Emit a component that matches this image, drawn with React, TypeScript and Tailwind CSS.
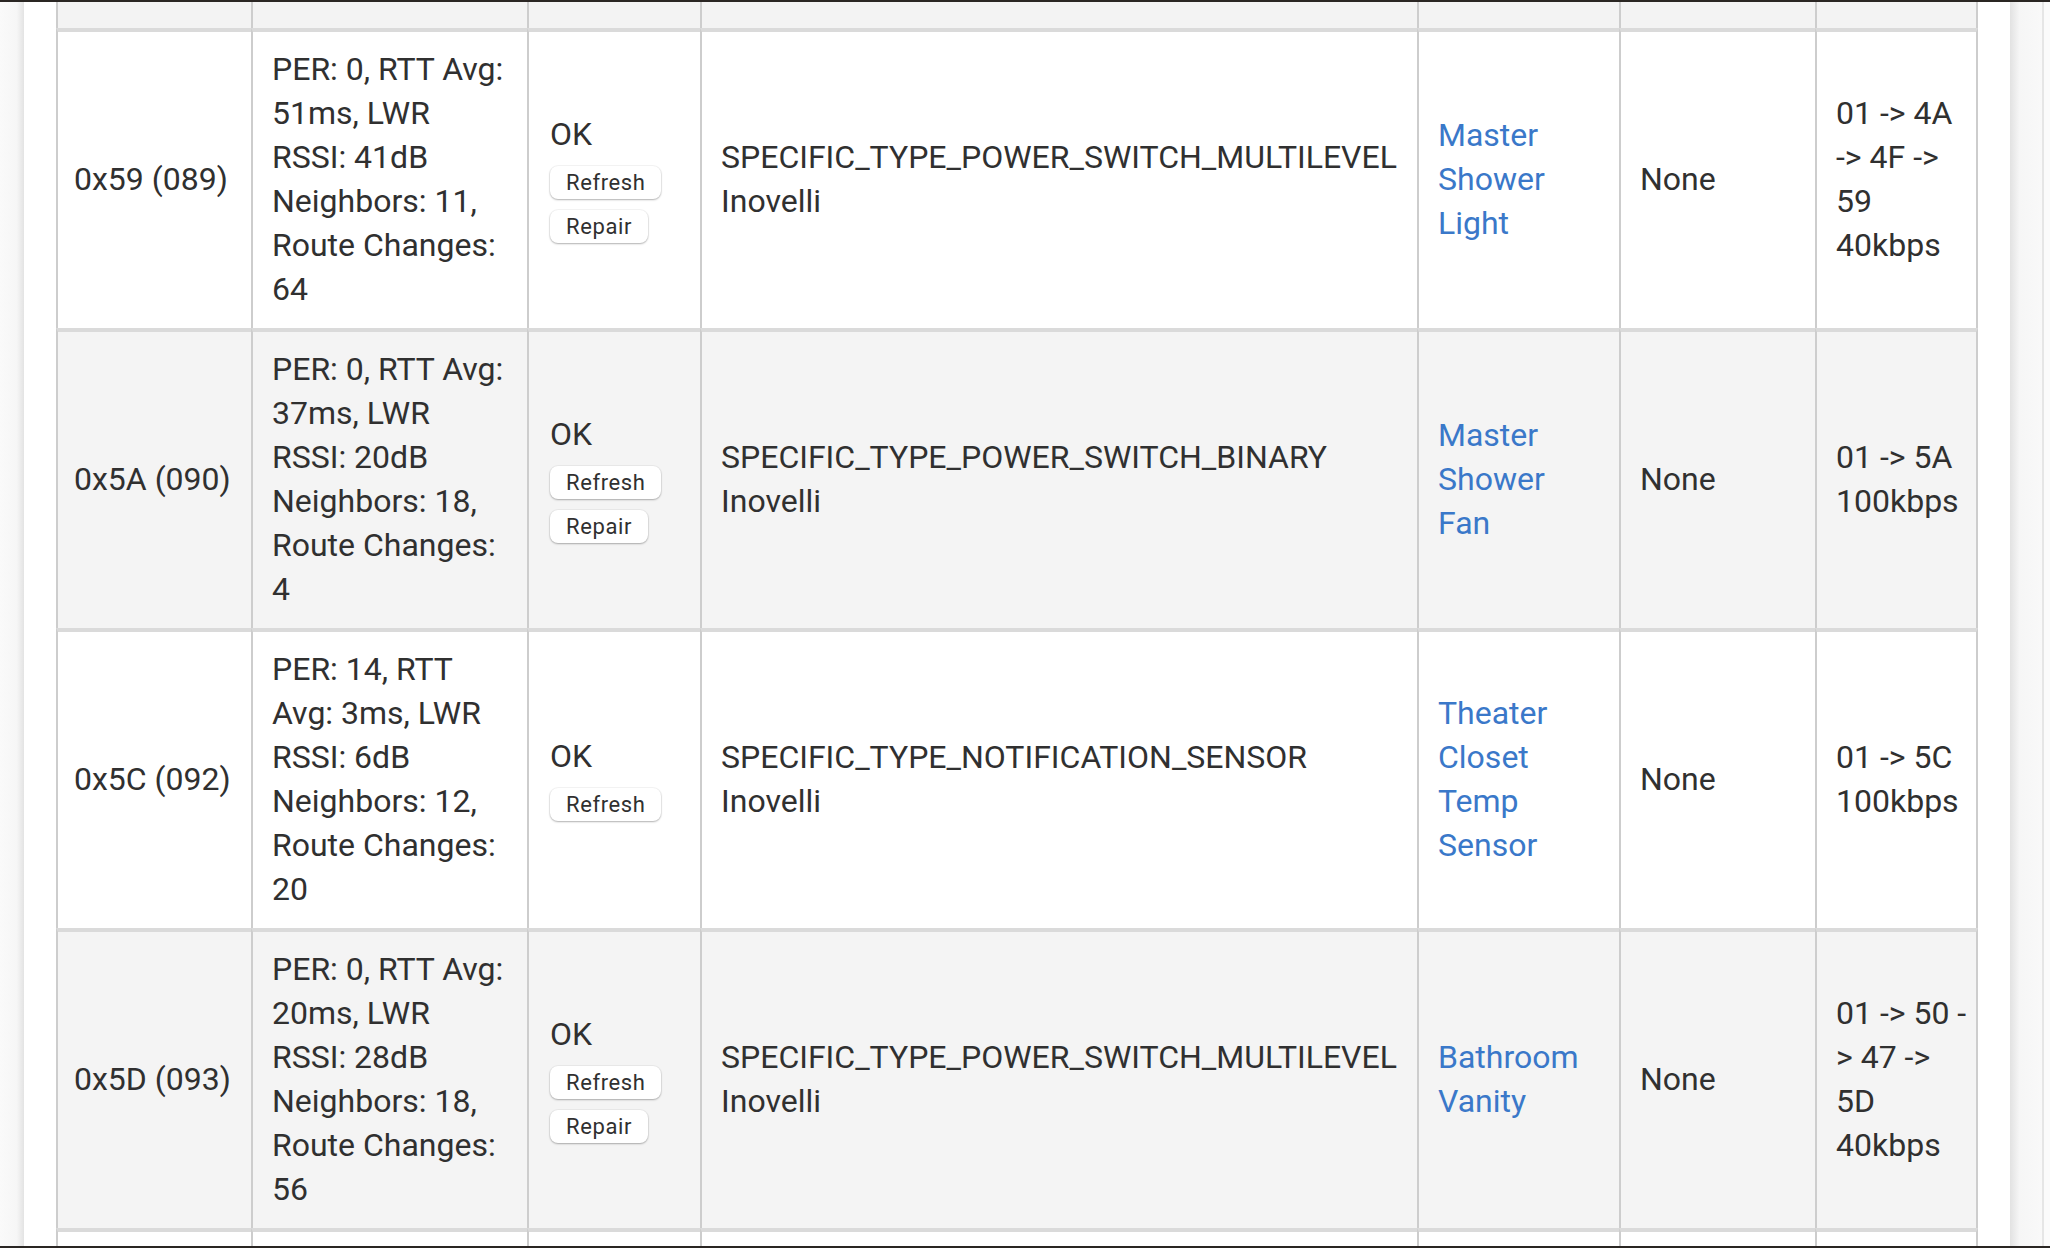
type NodeRow = {
  node: string;
  stats: string[];
  repair: boolean;
  type: string;
  maker: string;
  device: string[];
  security: string;
  route: string[];
};

const rows: NodeRow[] = [
  {
    node: "0x59 (089)",
    stats: ["PER: 0, RTT Avg:", "51ms, LWR", "RSSI: 41dB", "Neighbors: 11,", "Route Changes:", "64"],
    repair: true,
    type: "SPECIFIC_TYPE_POWER_SWITCH_MULTILEVEL",
    maker: "Inovelli",
    device: ["Master", "Shower", "Light"],
    security: "None",
    route: ["01 -> 4A", "-> 4F ->", "59", "40kbps"],
  },
  {
    node: "0x5A (090)",
    stats: ["PER: 0, RTT Avg:", "37ms, LWR", "RSSI: 20dB", "Neighbors: 18,", "Route Changes:", "4"],
    repair: true,
    type: "SPECIFIC_TYPE_POWER_SWITCH_BINARY",
    maker: "Inovelli",
    device: ["Master", "Shower", "Fan"],
    security: "None",
    route: ["01 -> 5A", "100kbps"],
  },
  {
    node: "0x5C (092)",
    stats: ["PER: 14, RTT", "Avg: 3ms, LWR", "RSSI: 6dB", "Neighbors: 12,", "Route Changes:", "20"],
    repair: false,
    type: "SPECIFIC_TYPE_NOTIFICATION_SENSOR",
    maker: "Inovelli",
    device: ["Theater", "Closet", "Temp", "Sensor"],
    security: "None",
    route: ["01 -> 5C", "100kbps"],
  },
  {
    node: "0x5D (093)",
    stats: ["PER: 0, RTT Avg:", "20ms, LWR", "RSSI: 28dB", "Neighbors: 18,", "Route Changes:", "56"],
    repair: true,
    type: "SPECIFIC_TYPE_POWER_SWITCH_MULTILEVEL",
    maker: "Inovelli",
    device: ["Bathroom", "Vanity"],
    security: "None",
    route: ["01 -> 50 -", "> 47 ->", "5D", "40kbps"],
  },
];

const grid = "grid grid-cols-[195px_276px_173px_717px_202px_196px_163px]";
const border = "flex items-center border-l-2 border-l-[#cdcdcd] border-t-4 border-t-[#dadada] pt-[15px] pb-[17px]";
const cell = border + " px-[19px]";
const nodeCell = border + " whitespace-nowrap px-[16px]";
const okCell = border + " px-[21px]";
const lastCell = cell + " border-r-2 border-r-[#cdcdcd]";

function Lines({ lines }: { lines: string[] }) {
  return (
    <div>
      {lines.map((l, i) => (
        <div key={i} className="whitespace-nowrap">{l}</div>
      ))}
    </div>
  );
}

function SmallBtn({ label, className }: { label: string; className?: string }) {
  return (
    <button className={"h-[33px] rounded-lg bg-white px-4 text-[22px] leading-[33px] tracking-[0.6px] text-[#303030] shadow-[0_1px_2px_rgba(0,0,0,0.28),0_0_0_1px_rgba(0,0,0,0.04)] " + (className || "")}>
      {label}
    </button>
  );
}

function EmptyRow({ bg, h, top }: { bg: string; h: string; top: boolean }) {
  const base = "border-l-2 border-l-[#cdcdcd]" + (top ? " border-t-4 border-t-[#dadada]" : "");
  return (
    <div className={grid + " " + bg + " " + h}>
      <div className={base} />
      <div className={base} />
      <div className={base} />
      <div className={base} />
      <div className={base} />
      <div className={base} />
      <div className={base + " border-r-2 border-r-[#cdcdcd]"} />
    </div>
  );
}

export default function App() {
  return (
    <div className="flex h-[1248px] w-[2050px] flex-col overflow-hidden bg-white font-[Roboto,sans-serif] text-[32px] leading-[44px] text-[#303030]">
      <div className="h-[2px] shrink-0 bg-[#2a2623]" />
      <div className="flex min-h-0 flex-1">
        <div className="w-[24px] shrink-0 bg-[linear-gradient(to_right,#fafafa,#f6f6f6_70%,#e3e3e3)]" />
        <div className="shrink-0 px-[32px]">
          <EmptyRow bg="bg-[#f3f3f3]" h="h-[26px]" top={false} />
          {rows.map((r, i) => (
            <div key={r.node} className={grid + " " + (i % 2 === 0 ? "bg-white" : "bg-[#f4f4f4]")}>
              <div className={nodeCell}>{r.node}</div>
              <div className={cell}>
                <Lines lines={r.stats} />
              </div>
              <div className={okCell}>
                <div className="flex flex-col items-start pb-[3px]">
                  <div>OK</div>
                  <SmallBtn label="Refresh" className="mt-[10px]" />
                  {r.repair && <SmallBtn label="Repair" className="mt-[11px]" />}
                </div>
              </div>
              <div className={cell}>
                <Lines lines={[r.type, r.maker]} />
              </div>
              <div className={cell}>
                <a href="#" className="text-[#3a78c9]">
                  <Lines lines={r.device} />
                </a>
              </div>
              <div className={cell}>{r.security}</div>
              <div className={lastCell}>
                <Lines lines={r.route} />
              </div>
            </div>
          ))}
          <EmptyRow bg="bg-white" h="h-[18px]" top={true} />
        </div>
        <div className="flex w-[40px] shrink-0">
          <div className="w-[32px] bg-[linear-gradient(to_right,#e2e2e2,#f6f6f6_30%,#f9f9f9)]" />
          <div className="w-[2px] bg-[#e6e6e6]" />
          <div className="flex-1 bg-[#fbfbfb]" />
        </div>
      </div>
      <div className="h-[2px] shrink-0 bg-[#2a2623]" />
    </div>
  );
}
